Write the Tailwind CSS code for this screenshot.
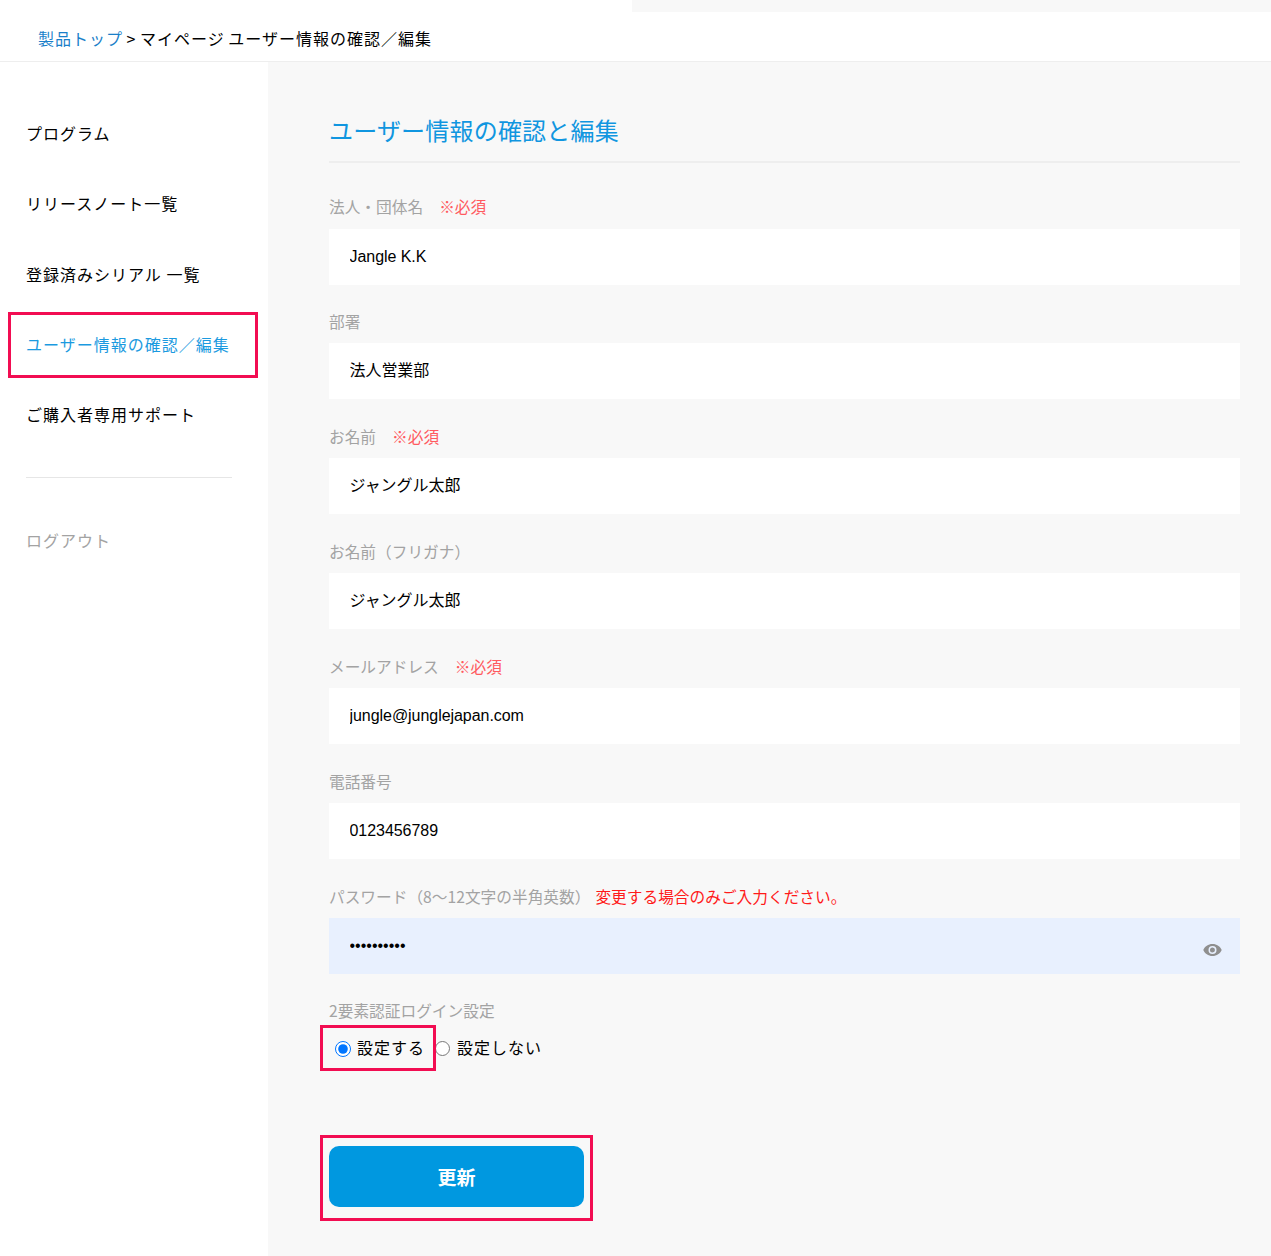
<!DOCTYPE html>
<html lang="ja">
<head>
  <meta charset="UTF-8" />
  <title>ユーザー情報の確認と編集</title>
  <script src="https://cdn.jsdelivr.net/npm/@tailwindcss/browser@4"></script>
</head>
<body class="relative bg-white text-black font-['Liberation_Sans','Noto_Sans_CJK_JP',sans-serif] h-[1256px] overflow-hidden">

  <!-- top strip -->
  <div class="h-3 ml-[632px] bg-[#f8f8f8]"></div>

  <!-- breadcrumb -->
  <div class="h-[50px] border-b border-[#eeeeee] pl-[38px] pt-[14px] text-[16px] leading-[24px] tracking-[1px] [word-spacing:-1px] font-['Noto_Sans_CJK_JP',sans-serif]">
    <a href="#" class="text-[#1a7fc9]">製品トップ</a> &gt; マイページ ユーザー情報の確認／編集
  </div>

  <div class="flex h-[1194px]">
    <!-- sidebar -->
    <nav class="w-[268px] shrink-0 pl-[26px] pt-[59px] pr-[36px] text-[16px] leading-[24px] tracking-[1px] font-['Noto_Sans_CJK_JP',sans-serif]">
      <a href="#" class="block h-[70.3px]">プログラム</a>
      <a href="#" class="block h-[70.3px]">リリースノート一覧</a>
      <a href="#" class="block h-[70.3px]">登録済みシリアル 一覧</a>
      <a href="#" class="block h-[70.3px] text-[#1b9ae0]">ユーザー情報の確認／編集</a>
      <a href="#" class="block h-[50px]">ご購入者専用サポート</a>
      <div class="border-t border-[#e6e6e6] mt-[25px] pt-[50px] text-[#a3a3a3]">ログアウト</div>
    </nav>

    <!-- main -->
    <main class="flex-1 bg-[#f8f8f8] pl-[61px] pr-[31px] pt-[50px] font-['Noto_Sans_CJK_JP',sans-serif]">
      <h1 class="text-[24px] leading-[36px] tracking-[0.2px] text-[#1096e0] pb-[13px] border-b-2 border-[#eeeeee]">ユーザー情報の確認と編集</h1>

      <form class="mt-[32.4px] flex flex-col gap-[25.7px]">
        <div>
          <label class="block text-[15.7px] leading-[24px] text-[#a3a3a3] mb-[9.2px]">法人・団体名<span class="ml-4 text-[#ff5a5f]">※必須</span></label>
          <input type="text" value="Jangle K.K" class="block w-full h-[56px] bg-white pl-[20.5px] pr-5 text-[16px] tracking-[-0.05px] font-['Liberation_Sans','Noto_Sans_CJK_JP',sans-serif]" />
        </div>
        <div>
          <label class="block text-[15.7px] leading-[24px] text-[#a3a3a3] mb-[9.2px]">部署</label>
          <input type="text" value="法人営業部" class="block w-full h-[56px] bg-white pl-[20.5px] pr-5 pb-1 text-[16px] tracking-[-0.05px] font-['Liberation_Sans','Noto_Sans_CJK_JP',sans-serif]" />
        </div>
        <div>
          <label class="block text-[15.7px] leading-[24px] text-[#a3a3a3] mb-[9.2px]">お名前<span class="ml-4 text-[#ff5a5f]">※必須</span></label>
          <input type="text" value="ジャングル太郎" class="block w-full h-[56px] bg-white pl-[20.5px] pr-5 pb-1 text-[16px] tracking-[-0.05px] font-['Liberation_Sans','Noto_Sans_CJK_JP',sans-serif]" />
        </div>
        <div>
          <label class="block text-[15.7px] leading-[24px] text-[#a3a3a3] mb-[9.2px]">お名前（フリガナ）</label>
          <input type="text" value="ジャングル太郎" class="block w-full h-[56px] bg-white pl-[20.5px] pr-5 pb-1 text-[16px] tracking-[-0.05px] font-['Liberation_Sans','Noto_Sans_CJK_JP',sans-serif]" />
        </div>
        <div>
          <label class="block text-[15.7px] leading-[24px] text-[#a3a3a3] mb-[9.2px]">メールアドレス<span class="ml-4 text-[#ff5a5f]">※必須</span></label>
          <input type="text" value="jungle@junglejapan.com" class="block w-full h-[56px] bg-white pl-[20.5px] pr-5 text-[16px] tracking-[-0.05px] font-['Liberation_Sans','Noto_Sans_CJK_JP',sans-serif]" />
        </div>
        <div>
          <label class="block text-[15.7px] leading-[24px] text-[#a3a3a3] mb-[9.2px]">電話番号</label>
          <input type="text" value="0123456789" class="block w-full h-[56px] bg-white pl-[20.5px] pr-5 text-[16px] tracking-[-0.05px] font-['Liberation_Sans','Noto_Sans_CJK_JP',sans-serif]" />
        </div>
        <div>
          <label class="block text-[15.7px] leading-[24px] text-[#a3a3a3] mb-[9.2px]">パスワード（8〜12文字の半角英数）<span class="ml-[5px] text-[#ff1a1a]">変更する場合のみご入力ください。</span></label>
          <div class="relative">
            <input type="password" value="abcdefghij" class="block w-full h-[56px] bg-[#e8f0fe] pl-[20.5px] pr-5 text-[16px] font-['Liberation_Sans',sans-serif]" />
            <svg class="absolute right-[18px] top-[25px] w-[19px] h-[14px]" viewBox="0 0 19 14" fill="#8f8f8f">
              <path fill-rule="evenodd" d="M9.500 1C5.200 1 1.800 3.500 0.300 7c1.500 3.500 4.900 6 9.200 6s7.700-2.500 9.200-6C17.200 3.500 13.800 1 9.500 1zm0 10a4 4 0 1 1 0-8 4 4 0 0 1 0 8zm0-6.500a2.500 2.500 0 1 0 0 5 2.500 2.500 0 0 0 0-5z"/>
            </svg>
          </div>
        </div>
        <div class="-mt-px">
          <label class="block text-[15.7px] leading-[24px] text-[#a3a3a3]">2要素認証ログイン設定</label>
          <div class="mt-[12px] flex items-center h-[24px] text-[16px] tracking-[1px]">
            <input type="radio" name="tfa" checked class="w-4 h-4 ml-[6px] mr-[6px] mt-[4px] accent-[#0075ff]" />
            <span class="mr-[10px]">設定する</span>
            <input type="radio" name="tfa" class="w-[15px] h-[15px] mr-[7px] mt-[4px]" />
            <span>設定しない</span>
          </div>
        </div>
        <button type="button" class="mt-[61.6px] w-[255px] h-[61px] rounded-[10px] bg-[#0098e0] text-white text-[19px] font-bold pt-[2px]">更新</button>
      </form>
    </main>
  </div>

  <!-- annotation boxes -->
  <div class="absolute left-[8px] top-[312px] w-[250px] h-[66px] border-[3px] border-[#f20d52]"></div>
  <div class="absolute left-[320px] top-[1025px] w-[116px] h-[46px] border-[3px] border-[#f20d52]"></div>
  <div class="absolute left-[320px] top-[1135px] w-[273px] h-[86px] border-[3px] border-[#f20d52]"></div>
</body>
</html>
